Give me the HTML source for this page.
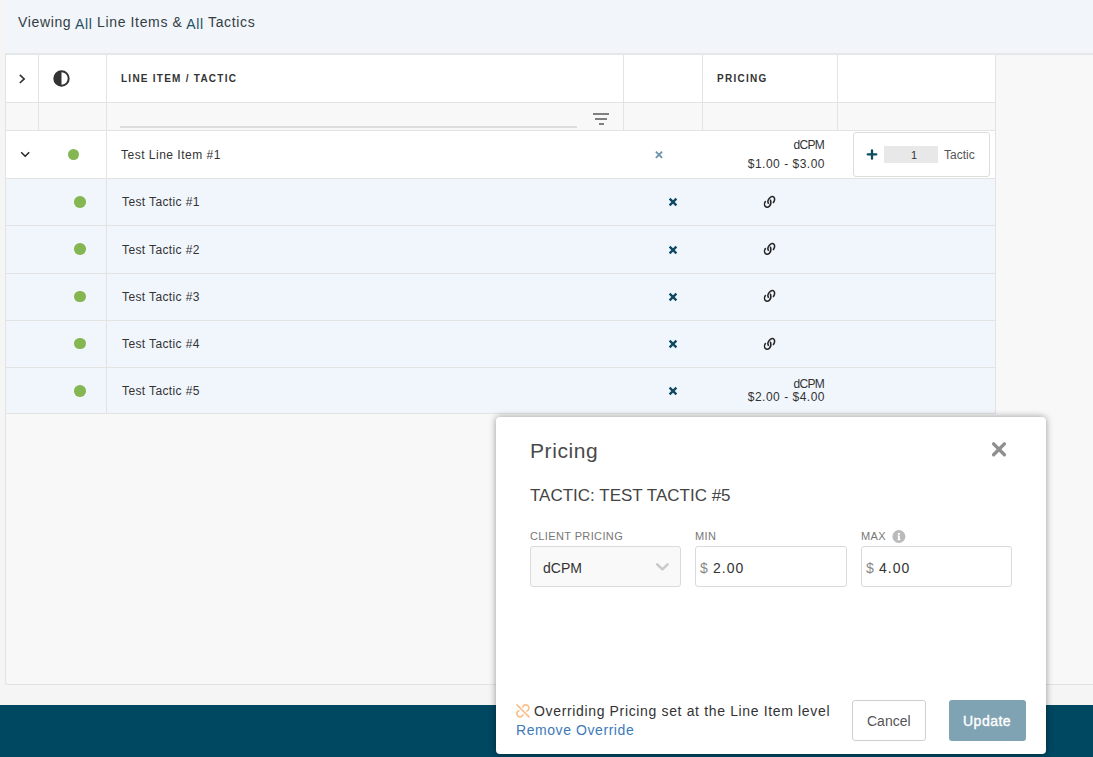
<!DOCTYPE html>
<html><head><meta charset="utf-8">
<style>
*{box-sizing:border-box;margin:0;padding:0}
html,body{width:1093px;height:757px;overflow:hidden;background:#f5f5f5;font-family:"Liberation Sans",sans-serif;color:#333}
.a{position:absolute}
.tx{position:absolute;white-space:nowrap;line-height:1}
#topbar{left:5px;top:0;width:1088px;height:55px;background:#f2f5f9;border-bottom:2px solid #e5e8eb}
.all{color:#1d5166;position:relative;top:2px}
#container{left:5px;top:54px;width:1100px;height:631px;background:#f8f8f8;border-left:1px solid #e3e3e3;border-bottom:1px solid #e3e3e3;border-bottom-left-radius:3px}
.vl{position:absolute;width:1px;background:#e3e3e3}
.hl{position:absolute;height:1px;background:#e3e3e3}
.hdr{font-size:10px;font-weight:bold;color:#333;letter-spacing:1.25px}
.cell{font-size:12px;color:#333;letter-spacing:0.38px}
.dot{position:absolute;width:11px;height:11px;border-radius:50%;background:#84b752}
#footer{left:0;top:705px;width:1093px;height:52px;background:#004761}
#modal{left:496px;top:417px;width:550px;height:337px;background:#fff;border-radius:4px;box-shadow:0 0 7px rgba(0,0,0,0.4)}
.lbl{font-size:11px;color:#777;letter-spacing:0.38px}
.field{position:absolute;height:41px;border:1px solid #d9dadc;border-radius:3px;background:#fff}
</style></head>
<body>
<div id="container" class="a"></div>
<div id="topbar" class="a"></div>
<div class="tx" style="left:18px;top:15px;font-size:14px;color:#333d45;letter-spacing:0.64px">Viewing <span class="all">All</span> Line Items &amp; <span class="all">All</span> Tactics</div>
<div class="a" style="left:6px;top:55px;width:989px;height:47px;background:#fff"></div>
<div class="a" style="left:6px;top:103px;width:989px;height:27px;background:#f8f8f8"></div>
<div class="a" style="left:6px;top:131px;width:989px;height:47px;background:#fff"></div>
<div class="a" style="left:6px;top:179px;width:989px;height:235px;background:#f1f6fd"></div>

<div class="hl" style="left:5px;top:102px;width:991px"></div>
<div class="hl" style="left:5px;top:130px;width:991px"></div>
<div class="hl" style="left:5px;top:178px;width:991px"></div>
<div class="hl" style="left:5px;top:225px;width:991px"></div>
<div class="hl" style="left:5px;top:273px;width:991px"></div>
<div class="hl" style="left:5px;top:320px;width:991px"></div>
<div class="hl" style="left:5px;top:367px;width:991px"></div>
<div class="hl" style="left:5px;top:413px;width:991px"></div>
<div class="vl" style="left:5px;top:55px;height:359px"></div>
<div class="vl" style="left:995px;top:55px;height:359px"></div>
<div class="vl" style="left:38px;top:55px;height:75px"></div>
<div class="vl" style="left:106px;top:55px;height:359px"></div>
<div class="vl" style="left:623px;top:55px;height:75px"></div>
<div class="vl" style="left:702px;top:55px;height:75px"></div>
<div class="vl" style="left:837px;top:55px;height:75px"></div>
<svg class="a" style="left:17px;top:73px" width="10" height="12" viewBox="0 0 10 12"><path d="M2.8 1.8 L7.2 5.9 L2.8 10" fill="none" stroke="#333" stroke-width="1.6"/></svg>
<svg class="a" style="left:52px;top:69px" width="19" height="19" viewBox="0 0 19 19"><circle cx="9.5" cy="9.5" r="7.2" fill="none" stroke="#333" stroke-width="2"/><path d="M9.5 2.3 A7.2 7.2 0 0 0 9.5 16.7 Z" fill="#333"/></svg>
<div class="tx hdr" style="left:121px;top:74px">LINE ITEM / TACTIC</div>
<div class="tx hdr" style="left:717px;top:74px">PRICING</div>
<div class="a" style="left:120px;top:126px;width:457px;height:2px;background:#dcdcdc"></div>
<div class="a" style="left:593px;top:113.4px;width:16px;height:1.9px;background:#808080"></div>
<div class="a" style="left:595px;top:117.9px;width:12px;height:1.9px;background:#808080"></div>
<div class="a" style="left:599px;top:122.7px;width:5px;height:1.9px;background:#808080"></div>
<svg class="a" style="left:19px;top:149px" width="12" height="10" viewBox="0 0 12 10"><path d="M2.2 3.2 L6.2 7.2 L10.2 3.2" fill="none" stroke="#222" stroke-width="1.4"/></svg>
<div class="dot" style="left:68px;top:149px"></div>
<div class="tx cell" style="left:121px;top:149px;letter-spacing:0.5px">Test Line Item #1</div>
<svg class="a" style="left:654px;top:150px" width="10" height="10" viewBox="0 0 10 10"><path d="M1.9 1.6 L8.1 7.8 M8.1 1.6 L1.9 7.8" stroke="#6d95aa" stroke-width="1.9"/></svg>
<div class="tx cell" style="right:269px;top:139px;letter-spacing:-0.7px">dCPM</div><div class="tx cell" style="right:268px;top:158px;letter-spacing:0.5px">$1.00 - $3.00</div>
<div class="a" style="left:853px;top:132px;width:137px;height:45px;border:1px solid #dcdcdc;border-radius:3px;background:#fff"></div>
<svg class="a" style="left:865px;top:148px" width="14" height="13" viewBox="0 0 14 13"><path d="M2.8 6.4 H11.2 M7 2.3 V10.7" stroke="#0d4a5f" stroke-width="2.3" stroke-linecap="round"/></svg>
<div class="a" style="left:884px;top:146px;width:54px;height:17px;background:#e8e8e8"></div>
<div class="tx cell" style="left:911px;top:150px;font-size:11px">1</div>
<div class="tx cell" style="left:944px;top:149px;color:#555;letter-spacing:0">Tactic</div>

<div class="dot" style="left:74.2px;top:196.25px;width:11.5px;height:11.5px"></div>
<div class="tx cell" style="left:122px;top:196px">Test Tactic #1</div>
<svg class="a" style="left:667px;top:196.4px" width="12" height="12" viewBox="0 0 12 12"><path d="M2.6 2.6 L9.4 9.4 M9.4 2.6 L2.6 9.4" stroke="#0d4a62" stroke-width="2.3"/></svg>
<svg class="a" style="left:762px;top:194px" width="16" height="16" viewBox="0 0 16 16"><g fill="none" stroke="#262626" stroke-width="1.55" stroke-linecap="round" stroke-linejoin="round"><path d="M6.3 9.2 L5.8 7.6 C6 5.5 8 3 10 2.6 C11.5 2.4 12.8 3.6 12.6 5.6 C12.5 6.8 11.9 7.8 11.4 8.5"/><path d="M3.4 7.6 C2.3 9 2.2 11.5 3.5 12.6 C4.6 13.6 6.5 13.3 7.6 12 C8.7 10.8 9.2 8.5 8.5 6.2"/></g></svg>
<div class="dot" style="left:74.2px;top:243.45px;width:11.5px;height:11.5px"></div>
<div class="tx cell" style="left:122px;top:244px">Test Tactic #2</div>
<svg class="a" style="left:667px;top:243.8px" width="12" height="12" viewBox="0 0 12 12"><path d="M2.6 2.6 L9.4 9.4 M9.4 2.6 L2.6 9.4" stroke="#0d4a62" stroke-width="2.3"/></svg>
<svg class="a" style="left:762px;top:241px" width="16" height="16" viewBox="0 0 16 16"><g fill="none" stroke="#262626" stroke-width="1.55" stroke-linecap="round" stroke-linejoin="round"><path d="M6.3 9.2 L5.8 7.6 C6 5.5 8 3 10 2.6 C11.5 2.4 12.8 3.6 12.6 5.6 C12.5 6.8 11.9 7.8 11.4 8.5"/><path d="M3.4 7.6 C2.3 9 2.2 11.5 3.5 12.6 C4.6 13.6 6.5 13.3 7.6 12 C8.7 10.8 9.2 8.5 8.5 6.2"/></g></svg>
<div class="dot" style="left:74.2px;top:290.65px;width:11.5px;height:11.5px"></div>
<div class="tx cell" style="left:122px;top:291px">Test Tactic #3</div>
<svg class="a" style="left:667px;top:290.8px" width="12" height="12" viewBox="0 0 12 12"><path d="M2.6 2.6 L9.4 9.4 M9.4 2.6 L2.6 9.4" stroke="#0d4a62" stroke-width="2.3"/></svg>
<svg class="a" style="left:762px;top:288px" width="16" height="16" viewBox="0 0 16 16"><g fill="none" stroke="#262626" stroke-width="1.55" stroke-linecap="round" stroke-linejoin="round"><path d="M6.3 9.2 L5.8 7.6 C6 5.5 8 3 10 2.6 C11.5 2.4 12.8 3.6 12.6 5.6 C12.5 6.8 11.9 7.8 11.4 8.5"/><path d="M3.4 7.6 C2.3 9 2.2 11.5 3.5 12.6 C4.6 13.6 6.5 13.3 7.6 12 C8.7 10.8 9.2 8.5 8.5 6.2"/></g></svg>
<div class="dot" style="left:74.2px;top:337.85px;width:11.5px;height:11.5px"></div>
<div class="tx cell" style="left:122px;top:338px">Test Tactic #4</div>
<svg class="a" style="left:667px;top:337.9px" width="12" height="12" viewBox="0 0 12 12"><path d="M2.6 2.6 L9.4 9.4 M9.4 2.6 L2.6 9.4" stroke="#0d4a62" stroke-width="2.3"/></svg>
<svg class="a" style="left:762px;top:336px" width="16" height="16" viewBox="0 0 16 16"><g fill="none" stroke="#262626" stroke-width="1.55" stroke-linecap="round" stroke-linejoin="round"><path d="M6.3 9.2 L5.8 7.6 C6 5.5 8 3 10 2.6 C11.5 2.4 12.8 3.6 12.6 5.6 C12.5 6.8 11.9 7.8 11.4 8.5"/><path d="M3.4 7.6 C2.3 9 2.2 11.5 3.5 12.6 C4.6 13.6 6.5 13.3 7.6 12 C8.7 10.8 9.2 8.5 8.5 6.2"/></g></svg>
<div class="dot" style="left:74.2px;top:385.05px;width:11.5px;height:11.5px"></div>
<div class="tx cell" style="left:122px;top:385px">Test Tactic #5</div>
<svg class="a" style="left:667px;top:385.0px" width="12" height="12" viewBox="0 0 12 12"><path d="M2.6 2.6 L9.4 9.4 M9.4 2.6 L2.6 9.4" stroke="#0d4a62" stroke-width="2.3"/></svg>
<div class="tx cell" style="right:269px;top:378px;letter-spacing:-0.7px">dCPM</div><div class="tx cell" style="right:268px;top:391px;letter-spacing:0.5px">$2.00 - $4.00</div>
<div id="footer" class="a"></div>
<div id="modal" class="a"></div>
<div class="tx" style="left:530px;top:440px;font-size:21px;color:#4a4a4a;letter-spacing:0.6px">Pricing</div>
<svg class="a" style="left:989px;top:439px" width="20" height="20" viewBox="0 0 20 20"><path d="M4.6 4.9 L15.4 15.7 M15.4 4.9 L4.6 15.7" stroke="#8f8f8f" stroke-width="3.4" stroke-linecap="round"/></svg>
<div class="tx" style="left:530px;top:487px;font-size:17px;color:#444">TACTIC: TEST TACTIC #5</div>
<div class="tx lbl" style="left:530px;top:531px">CLIENT PRICING</div>
<div class="tx lbl" style="left:695px;top:531px">MIN</div>
<div class="tx lbl" style="left:861px;top:531px">MAX</div>
<svg class="a" style="left:892px;top:530px" width="14" height="14" viewBox="0 0 14 14"><circle cx="6.9" cy="6.5" r="6.5" fill="#bababa"/><rect x="6" y="2.9" width="1.9" height="1.9" fill="#fff"/><path d="M5.4 5.6 H7.9 V9.2 H8.5 V10.2 H5.4 V9.2 H6 V6.5 H5.4 Z" fill="#fff"/></svg>
<div class="field" style="left:530px;top:546px;width:151px;background:#f9f9f9"></div>
<div class="tx" style="left:543px;top:561px;font-size:14px;color:#333">dCPM</div>
<svg class="a" style="left:654px;top:561px" width="16" height="12" viewBox="0 0 16 12"><path d="M3.2 3.3 L8.4 8.3 L13.6 3.3" fill="none" stroke="#c9c9c9" stroke-width="2.5" stroke-linecap="round" stroke-linejoin="round"/></svg>
<div class="field" style="left:695px;top:546px;width:152px"></div>
<div class="tx" style="left:700px;top:561px;font-size:14px;color:#888">$</div>
<div class="tx" style="left:713px;top:561px;font-size:14px;color:#333;letter-spacing:1px">2.00</div>
<div class="field" style="left:861px;top:546px;width:151px"></div>
<div class="tx" style="left:866px;top:561px;font-size:14px;color:#888">$</div>
<div class="tx" style="left:879px;top:561px;font-size:14px;color:#333;letter-spacing:1px">4.00</div>
<svg class="a" style="left:510px;top:698px" width="26" height="26" viewBox="0 0 26 26"><g fill="none" stroke="#f8c18d" stroke-width="1.7" stroke-linecap="round"><path d="M7 6.8 L19 18.8"/><path d="M12.8 8.9 A3.2 3.2 0 1 1 17 13"/><path d="M8.9 12.7 A3.2 3.2 0 1 0 13 16.8"/></g></svg>
<div class="tx" style="left:534px;top:704px;font-size:14px;color:#333;letter-spacing:0.65px">Overriding Pricing set at the Line Item level</div>
<div class="tx" style="left:516px;top:723px;font-size:14px;color:#3d7ab8;letter-spacing:0.57px">Remove Override</div>
<div class="a" style="left:852px;top:700px;width:74px;height:41px;border:1px solid #cfcfcf;border-radius:3px;background:#fff"></div>
<div class="tx" style="left:867px;top:714px;font-size:14px;color:#555">Cancel</div>
<div class="a" style="left:949px;top:700px;width:77px;height:41px;border-radius:3px;background:#7fa3b3"></div>
<div class="tx" style="left:963px;top:714px;font-size:14px;color:#fff;letter-spacing:0.5px;-webkit-text-stroke:0.35px #fff">Update</div>
</body></html>
